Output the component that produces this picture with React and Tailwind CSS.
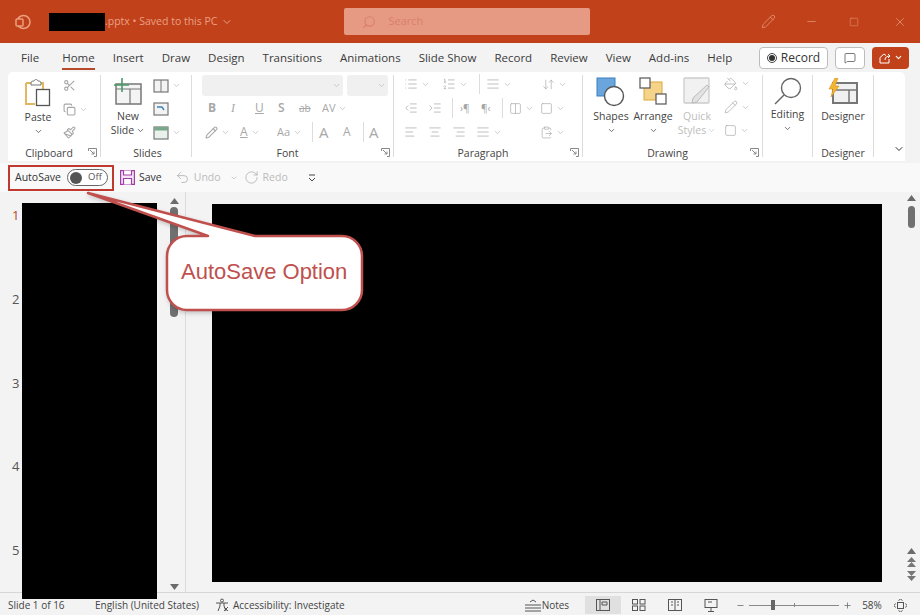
import {
  AlignCenter, AlignJustify, AlignLeft, AlignRight, ArrowDownUp, ChevronDown, ClipboardPaste, Columns2, Copy,
  IndentDecrease, IndentIncrease, List, ListOrdered, MessageSquare, Minus, Paintbrush, PaintBucket, Pencil,
  Plus, RotateCw, Scissors, Search, Square, Undo2, X,
} from "lucide-react";

const SANS = "font-['Open_Sans','Noto_Sans',sans-serif]";

const TABS = ["File", "Home", "Insert", "Draw", "Design", "Transitions", "Animations", "Slide Show", "Record", "Review", "View", "Add-ins", "Help"];

function Chev({ className = "text-[#888]" }) {
  return <ChevronDown size={9} strokeWidth={2} className={className} />;
}

function Launcher() {
  return (
    <svg width="9" height="9" viewBox="0 0 9 9" className="absolute bottom-0 right-[3px] text-[#888]" fill="none" stroke="currentColor">
      <path d="M.5 3V.5H8.500V8.500H6M2 2l4 4M6 3.500V6H3.500" />
    </svg>
  );
}

function Group({ label, className, labelClass = "", children, launcher = true }) {
  return (
    <div className={`relative flex shrink-0 flex-col border-r border-[#dcdcdc] ${className}`}>
      <div className="min-h-0 flex-1">{children}</div>
      <div className={`h-[12px] text-center text-[10.5px] leading-[16px] text-[#444] ${labelClass}`}>{label}</div>
      {launcher && <Launcher />}
    </div>
  );
}

function SmallIcon({ children, chevron = false }) {
  return (
    <div className="flex h-[23.500px] items-center gap-[3px] text-[#a5a5a5]">
      {children}
      {chevron && <Chev className="text-[#bbb]" />}
    </div>
  );
}

function PasteIcon() {
  return (
    <svg width="28" height="29" viewBox="0 0 28 29" fill="none">
      <path d="M2 5h5M17 5h2v6M2 5v21h9" stroke="#e2b75e" strokeWidth="2" />
      <path d="M7 5c0-2 2-2 3-2 1-2 3-2 4 0 1 0 3 0 3 2v2H7z" fill="#fff" stroke="#777" />
      <rect x="12.500" y="11.500" width="13" height="16" fill="#fff" stroke="#555" strokeWidth="1.300" />
    </svg>
  );
}

function NewSlideIcon() {
  return (
    <svg width="30" height="28" viewBox="0 0 30 28" fill="none">
      <rect x="3" y="7" width="25" height="20" fill="#f4f4f4" stroke="#777" strokeWidth="1.500" />
      <path d="M3 12h25M17 12v15" stroke="#777" strokeWidth="1.200" />
      <path d="M9 1v14M1 8h15" stroke="#4a9a68" strokeWidth="1.600" />
    </svg>
  );
}

function SlideThumb({ tone = "plain" }) {
  return (
    <svg width="16" height="14" viewBox="0 0 16 14" fill="none">
      <rect x="1" y="1" width="14" height="12" fill={tone === "green" ? "#e9f1ec" : "#f3f3f3"} stroke="#777" strokeWidth="1.200" />
      {tone === "green" && <rect x="1" y="1" width="14" height="3.500" fill="#79a88c" />}
      {tone === "plain" && <path d="M8 1v12" stroke="#777" />}
      {tone === "blue" && <path d="M4 5h5l2 3" stroke="#3f83b5" strokeWidth="1.400" />}
    </svg>
  );
}

function ShapesIcon() {
  return (
    <svg width="30" height="30" viewBox="0 0 30 30" fill="none">
      <rect x="1" y="1" width="18" height="18" fill="#6aa6dd" stroke="#3c7fbd" />
      <circle cx="18" cy="19" r="9.500" fill="#fff" stroke="#555" strokeWidth="1.400" />
    </svg>
  );
}

function ArrangeIcon() {
  return (
    <svg width="28" height="28" viewBox="0 0 28 28" fill="none">
      <rect x="5" y="5" width="18" height="18" fill="#f5d388" stroke="#dca83d" />
      <rect x="1" y="1" width="10" height="10" fill="#fff" stroke="#555" strokeWidth="1.200" />
      <rect x="17" y="17" width="10" height="10" fill="#fff" stroke="#555" strokeWidth="1.200" />
    </svg>
  );
}

function QuickStylesIcon() {
  return (
    <svg width="28" height="28" viewBox="0 0 28 28" fill="none">
      <rect x="1" y="1" width="25" height="25" rx="1" fill="#f1f1f1" stroke="#ccc" strokeWidth="1.300" />
      <path d="M26 10 14 25l-5 1 1-5L24 8z" fill="#e2e2e2" stroke="#bbb" />
    </svg>
  );
}

function MagnifierIcon() {
  return (
    <svg width="28" height="28" viewBox="0 0 28 28" fill="none" stroke="#666" strokeWidth="1.400">
      <circle cx="17" cy="11" r="9.500" fill="#fff" />
      <path d="M10 18 1 27" />
    </svg>
  );
}

function DesignerIcon() {
  return (
    <svg width="30" height="26" viewBox="0 0 30 26" fill="none">
      <rect x="5" y="5" width="24" height="20" fill="#f1f1f1" stroke="#777" strokeWidth="2" />
      <path d="M5 12h24M21 12v13" stroke="#777" strokeWidth="1.500" />
      <path d="M7 0 1 11h4l-2 8 8-11H7l3-8z" fill="#f2b632" stroke="#d98f1d" strokeWidth=".6" />
    </svg>
  );
}

function SaveIcon() {
  return (
    <svg width="15" height="15" viewBox="0 0 15 15" fill="none" stroke="#a23ca8" strokeWidth="1.200">
      <rect x=".6" y=".6" width="13.800" height="13.800" fill="#f4e5f6" />
      <path d="M3.500 .6v4.400h8V.6M3.500 14.400V8.500h8v5.900" fill="#fff" />
    </svg>
  );
}

function Callout() {
  return (
    <div className="pointer-events-none absolute left-0 top-0 z-20">
      <svg width="400" height="320" viewBox="0 0 400 320" fill="none" className="drop-shadow-[1px_2px_2px_rgba(0,0,0,0.2)]">
        <path
          d="M88 193 208 236H187a20 20 0 0 0-20 20v34a20 20 0 0 0 20 20H342a20 20 0 0 0 20-20V256a20 20 0 0 0-20-20H255Z"
          fill="#fff"
          stroke="#c0504d"
          strokeWidth="2.500"
          strokeLinejoin="round"
        />
      </svg>
      <div className="absolute left-[181px] top-[259px] font-['Liberation_Sans',sans-serif] text-[22px] leading-[26px] whitespace-nowrap text-[#c0504d]">
        AutoSave Option
      </div>
    </div>
  );
}

function ScrollArrow({ up = true }) {
  return (
    <svg width="9" height="6" viewBox="0 0 9 6" className="shrink-0">
      <path d={up ? "M4.500 0 9 6H0z" : "M0 0h9L4.500 6z"} fill="#6b6b6b" />
    </svg>
  );
}

function DoubleArrow({ up = true }) {
  return (
    <svg width="9" height="11" viewBox="0 0 9 11">
      <path d={up ? "M4.500 0 9 5H0zM4.500 5 9 10H0z" : "M0 0h9L4.500 5zM0 5h9L4.500 10z"} fill="#777" />
    </svg>
  );
}

export default function App() {
  return (
    <div className={`relative flex h-[615px] w-[920px] flex-col overflow-hidden bg-[#f3f3f3] text-[#333] ${SANS}`}>
      {/* title bar */}
      <div className="flex h-[43px] shrink-0 items-center bg-[#c1411a] text-[#e9a083]">
        <svg width="16" height="16" viewBox="0 0 16 16" className="ml-[15px]" fill="none" stroke="#eb9f7f" strokeWidth="1.500">
          <circle cx="8.500" cy="8" r="6.500" />
          <rect x="1" y="5" width="7" height="7" rx="1" fill="#c1411a" />
        </svg>
        <div className="ml-[18px] h-[18px] w-[56px] bg-black" />
        <span className="text-[10.5px]">.pptx • Saved to this PC</span>
        <ChevronDown size={12} className="ml-[4px]" />
        <div className="ml-[111px] flex h-[27px] w-[246px] items-center rounded-[2px] bg-[#e69a84] pl-[18px] text-[#d9806a]">
          <Search size={14} className="-scale-x-100" />
          <span className="ml-[12px] text-[11px]">Search</span>
        </div>
        <Pencil size={15} strokeWidth={1.200} className="ml-[171px]" />
        <Minus size={13} className="ml-[29px]" strokeWidth={1.200} />
        <Square size={10} className="ml-[31px]" strokeWidth={1.200} />
        <X size={14} className="ml-[34px]" strokeWidth={1.200} />
      </div>

      {/* tabs */}
      <div className="flex h-[29px] shrink-0 items-center pl-[21px] pr-[11px]">
        <div className="flex items-center gap-[18px] text-[11.5px] text-[#3b3b3b]">
          {TABS.map((tab) => (
            <div key={tab} className={`relative leading-[28px] whitespace-nowrap ${tab === "File" ? "mr-[5px]" : ""}`}>
              {tab}
              {tab === "Home" && <div className="absolute bottom-[2px] left-0 right-0 h-[2px] bg-[#b8482a]" />}
            </div>
          ))}
        </div>
        <div className="ml-auto flex items-center gap-[7px]">
          <div className="flex h-[22px] w-[69px] items-center justify-center gap-[4px] rounded-[4px] border border-[#bdbdbd] bg-white text-[12px]">
            <span className="flex h-[10px] w-[10px] items-center justify-center rounded-full border border-[#444]">
              <span className="h-[6px] w-[6px] rounded-full bg-[#333]" />
            </span>
            Record
          </div>
          <div className="flex h-[22px] w-[30px] items-center justify-center rounded-[4px] border border-[#bdbdbd] bg-white">
            <MessageSquare size={12} strokeWidth={1.300} />
          </div>
          <div className="flex h-[22px] w-[37px] items-center justify-center gap-[3px] rounded-[4px] bg-[#c1411a] text-white">
            <svg width="12" height="12" viewBox="0 0 12 12" fill="none" stroke="#fff">
              <path d="M1 5.500V11h9V7M1 5.500 5 2l2 1.500M6 8c0-3 2-4 5-4M9 2l2 2-2 2" />
            </svg>
            <ChevronDown size={9} strokeWidth={3} />
          </div>
        </div>
      </div>

      {/* ribbon */}
      <div className="relative ml-[8px] flex h-[89px] w-[897px] shrink-0 rounded-t-[5px] bg-white pt-[3px] pb-[4px] text-[#444]">
        <Group label="Clipboard" className="w-[93px]" labelClass="pr-[10px]">
          <div className="flex pl-[14px]">
            <div className="flex w-[32px] flex-col items-center pt-[3px]">
              <PasteIcon />
              <span className="mt-[3px] text-[10.5px] leading-[15px]">Paste</span>
              <ChevronDown size={9} strokeWidth={2} className="mt-[2px]" />
            </div>
            <div className="ml-[9px] flex flex-col -mt-[1px]">
              <SmallIcon><Scissors size={13} /></SmallIcon>
              <SmallIcon chevron><Copy size={13} /></SmallIcon>
              <SmallIcon><Paintbrush size={13} /></SmallIcon>
            </div>
          </div>
        </Group>

        <Group label="Slides" className="w-[91px]" labelClass="pl-[3px]" launcher={false}>
          <div className="flex pl-[10px]">
            <div className="flex w-[34px] flex-col items-center pt-[2px]">
              <NewSlideIcon />
              <span className="mt-[4px] text-[10.5px] leading-[14px]">New</span>
              <span className="flex items-center gap-[2px] text-[10.5px] leading-[14px]">
                Slide <ChevronDown size={9} strokeWidth={2} />
              </span>
            </div>
            <div className="ml-[8px] flex flex-col -mt-[1px]">
              <SmallIcon chevron><SlideThumb /></SmallIcon>
              <SmallIcon><SlideThumb tone="blue" /></SmallIcon>
              <SmallIcon chevron><SlideThumb tone="green" /></SmallIcon>
            </div>
          </div>
        </Group>

        <Group label="Font" className="w-[202px]" labelClass="pr-[10px]">
          <div className="flex flex-col pl-[10px] text-[#a8a8a8]">
            <div className="flex gap-[4px]">
              <div className="flex h-[21px] w-[141px] items-center justify-end rounded-[3px] bg-[#f0f0f0] pr-[2px]"><Chev className="text-[#bbb]" /></div>
              <div className="flex h-[21px] w-[41px] items-center justify-end rounded-[3px] bg-[#f0f0f0] pr-[2px]"><Chev className="text-[#bbb]" /></div>
            </div>
            <div className="flex h-[24px] items-center text-[12px]">
              <span className="w-[23px] pl-[6px] font-bold">B</span>
              <span className="w-[24px] pl-[6px] font-['Liberation_Serif',serif] italic">I</span>
              <span className="w-[23px] pl-[6px] underline">U</span>
              <span className="w-[23px] pl-[6px] font-semibold">S</span>
              <span className="w-[24px] pl-[4px] text-[10px] line-through">ab</span>
              <span className="flex w-[30px] items-center gap-[2px] pl-[3px] text-[11px]">AV <Chev className="text-[#bbb]" /></span>
            </div>
            <div className="flex h-[24px] items-center">
              <span className="flex w-[36px] items-center gap-[3px] pl-[3px]"><Pencil size={13} /><Chev className="text-[#bbb]" /></span>
              <span className="flex w-[37px] items-center gap-[3px] pl-[2px] text-[12px] underline">A<Chev className="text-[#bbb]" /></span>
              <span className="flex w-[37px] items-center gap-[3px] pl-[2px] text-[11px]">Aa<Chev className="text-[#bbb]" /></span>
              <span className="h-[20px] border-l border-[#ddd]" />
              <span className="w-[24px] pl-[6px] text-[15px]">A</span>
              <span className="w-[26px] pl-[6px] text-[12px]">A</span>
              <span className="h-[20px] border-l border-[#ddd]" />
              <span className="pl-[5px] text-[15px]">A</span>
            </div>
          </div>
        </Group>

        <Group label="Paragraph" className="w-[189px]" labelClass="pr-[10px]">
          <div className="flex flex-col pl-[10px] -mt-[3px] text-[#a5a5a5]">
            <div className="flex h-[24px] items-center">
              <span className="flex w-[38px] items-center gap-[3px]"><List size={14} strokeWidth={1.200} /><Chev className="text-[#bbb]" /></span>
              <span className="flex w-[37px] items-center gap-[3px]"><ListOrdered size={14} strokeWidth={1.200} /><Chev className="text-[#bbb]" /></span>
              <span className="h-[20px] border-l border-[#ddd]" />
              <span className="flex w-[62px] items-center gap-[3px] pl-[6px]"><AlignJustify size={14} strokeWidth={1.200} /><Chev className="text-[#bbb]" /></span>
              <span className="flex items-center gap-[3px]"><ArrowDownUp size={13} strokeWidth={1.200} /><Chev className="text-[#bbb]" /></span>
            </div>
            <div className="flex h-[24px] items-center">
              <span className="w-[24px]"><IndentDecrease size={14} strokeWidth={1.200} /></span>
              <span className="w-[24px]"><IndentIncrease size={14} strokeWidth={1.200} /></span>
              <span className="h-[20px] border-l border-[#ddd]" />
              <span className="w-[24px] pl-[7px] text-[10px]">›¶</span>
              <span className="w-[25px] pl-[4px] text-[10px]">¶‹</span>
              <span className="h-[20px] border-l border-[#ddd]" />
              <span className="flex w-[37px] items-center gap-[3px] pl-[6px]"><Columns2 size={13} strokeWidth={1.200} /><Chev className="text-[#bbb]" /></span>
              <span className="flex items-center gap-[3px]"><Square size={13} strokeWidth={1.200} /><Chev className="text-[#bbb]" /></span>
            </div>
            <div className="flex h-[24px] items-center">
              <span className="w-[24px]"><AlignLeft size={14} strokeWidth={1.200} /></span>
              <span className="w-[24px]"><AlignCenter size={14} strokeWidth={1.200} /></span>
              <span className="w-[24px]"><AlignRight size={14} strokeWidth={1.200} /></span>
              <span className="flex w-[62px] items-center gap-[3px]"><AlignJustify size={14} strokeWidth={1.200} /><Chev className="text-[#bbb]" /></span>
              <span className="flex items-center gap-[3px] pl-[2px]"><ClipboardPaste size={13} strokeWidth={1.200} /><Chev className="text-[#bbb]" /></span>
            </div>
          </div>
        </Group>

        <Group label="Drawing" className="w-[180px]" labelClass="pr-[10px]">
          <div className="flex pt-[2px]">
            <div className="flex w-[52px] flex-col items-center pl-[4px]">
              <ShapesIcon />
              <span className="mt-[2px] text-[10.5px] leading-[14px]">Shapes</span>
              <ChevronDown size={9} strokeWidth={2} className="mt-[3px]" />
            </div>
            <div className="flex w-[36px] flex-col items-center">
              <ArrangeIcon />
              <span className="mt-[4px] text-[10.5px] leading-[14px]">Arrange</span>
              <ChevronDown size={9} strokeWidth={2} className="mt-[3px]" />
            </div>
            <div className="ml-[6px] flex w-[40px] flex-col items-center text-[#bdbdbd]">
              <QuickStylesIcon />
              <span className="mt-[4px] text-[10.5px] leading-[14px]">Quick</span>
              <span className="flex items-center gap-[1px] text-[10.5px] leading-[14px]">Styles <Chev className="text-[#ccc]" /></span>
            </div>
            <div className="ml-[7px] flex flex-col -mt-[5px]">
              <SmallIcon chevron><PaintBucket size={14} strokeWidth={1.200} /></SmallIcon>
              <SmallIcon chevron><Pencil size={14} strokeWidth={1.200} /></SmallIcon>
              <SmallIcon chevron><Square size={13} strokeWidth={1.200} /></SmallIcon>
            </div>
          </div>
        </Group>

        <Group label="" className="w-[50px]" launcher={false}>
          <div className="flex flex-col items-center pt-[2px]">
            <MagnifierIcon />
            <span className="mt-[2px] text-[10.5px] leading-[14px]">Editing</span>
            <ChevronDown size={9} strokeWidth={2} className="mt-[3px]" />
          </div>
        </Group>

        <Group label="Designer" className="w-[61px]" launcher={false}>
          <div className="flex flex-col items-center pt-[3px]">
            <DesignerIcon />
            <span className="mt-[5px] text-[10.5px] leading-[14px]">Designer</span>
          </div>
        </Group>

        <ChevronDown size={12} strokeWidth={2} className="absolute bottom-[6px] right-[0px] text-[#333]" />
      </div>

      {/* quick access toolbar */}
      <div className="mt-[2px] flex h-[29px] shrink-0 items-center bg-[#f9f9f9] text-[10.5px]">
        <div className="ml-[8px] flex h-[26px] w-[106px] items-center gap-[6px] border-2 border-[#c0392f] pl-[5px]">
          <span>AutoSave</span>
          <div className="flex h-[17px] w-[41px] items-center rounded-full border border-[#666] bg-white pl-[2px] pr-[5px]">
            <div className="h-[12px] w-[12px] rounded-full bg-[#555]" />
            <span className="ml-auto text-[9.5px] text-[#555]">Off</span>
          </div>
        </div>
        <span className="ml-[6px]"><SaveIcon /></span>
        <span className="ml-[4px]">Save</span>
        <Undo2 size={15} strokeWidth={1.200} className="ml-[13px] text-[#aaa]" />
        <span className="ml-[4px] text-[#bbb]">Undo</span>
        <ChevronDown size={8} className="ml-[9px] text-[#bbb]" />
        <RotateCw size={15} strokeWidth={1.200} className="ml-[6px] text-[#aaa]" />
        <span className="ml-[4px] text-[#bbb]">Redo</span>
        <svg width="8" height="8" viewBox="0 0 8 8" className="ml-[20px]" fill="none" stroke="#444">
          <path d="M1 1h6M1 4l3 3 3-3" />
        </svg>
      </div>

      {/* work area */}
      <div className="flex h-[401px] shrink-0 border-b border-[#d6d6d6]">
        {/* thumbnails */}
        <div className="flex w-[22px] shrink-0 flex-col pl-[12px] pt-[14px] text-[13px] leading-[18px] text-[#555]">
          <span className="h-[84px] text-[#b8482a]">1</span>
          <span className="h-[84px]">2</span>
          <span className="h-[83px]">3</span>
          <span className="h-[84px]">4</span>
          <span>5</span>
        </div>
        <div className="relative z-10 mt-[11px] h-[396px] w-[135px] shrink-0 bg-black" />
        <div className="ml-[11px] flex w-[12px] shrink-0 flex-col items-center pt-[6px] pb-[2px]">
          <ScrollArrow />
          <div className="mt-[3px] h-[110px] w-[8px] rounded-full bg-[#707070]" />
          <div className="mt-auto"><ScrollArrow up={false} /></div>
        </div>
        <div className="ml-[5px] w-[1px] shrink-0 bg-[#dcdcdc]" />

        {/* slide */}
        <div className="ml-[26px] mt-[12px] h-[378px] w-[670px] shrink-0 bg-black" />

        {/* right scrollbar */}
        <div className="ml-[23px] flex w-[13px] shrink-0 flex-col items-center pt-[3px] pb-[10px]">
          <ScrollArrow />
          <div className="mt-[5px] h-[22px] w-[7px] rounded-full bg-[#707070]" />
          <div className="mt-auto flex flex-col items-center gap-[3px]">
            <ScrollArrow />
            <DoubleArrow />
            <DoubleArrow up={false} />
          </div>
        </div>
      </div>

      {/* status bar */}
      <div className="flex h-[21px] shrink-0 items-center pt-[3px] text-[10px] text-[#444]">
        <span className="ml-[8px] w-[87px]">Slide 1 of 16</span>
        <span className="w-[120px]">English (United States)</span>
        <svg width="14" height="14" viewBox="0 0 14 14" fill="none" stroke="#555">
          <circle cx="7" cy="2.500" r="1.500" />
          <path d="M1 5h12M5 5v3l-2 5M9 5v3l2 5M9 9l4 4M13 9l-4 4" />
        </svg>
        <span className="ml-[4px]">Accessibility: Investigate</span>
        <svg width="16" height="13" viewBox="0 0 16 13" className="ml-[180px]" fill="none" stroke="#555">
          <path d="M0 6h16M0 9h16M0 12h16M5 3l3-2 3 2" />
        </svg>
        <span className="ml-[1px]">Notes</span>
        <div className="ml-[16px] flex h-[18px] w-[36px] items-center justify-center bg-[#e0e0e0]">
          <svg width="14" height="12" viewBox="0 0 14 12" fill="none" stroke="#555"><rect x=".5" y=".5" width="13" height="11" /><path d="M4 .5v11M6 6h5V3H6z" /></svg>
        </div>
        <div className="flex w-[36px] justify-center">
          <svg width="14" height="12" viewBox="0 0 14 12" fill="none" stroke="#555"><rect x=".5" y=".5" width="5" height="4.500" /><rect x="8" y=".5" width="5" height="4.500" /><rect x=".5" y="7" width="5" height="4.500" /><rect x="8" y="7" width="5" height="4.500" /></svg>
        </div>
        <div className="flex w-[36px] justify-center">
          <svg width="14" height="12" viewBox="0 0 14 12" fill="none" stroke="#555"><rect x=".5" y=".5" width="13" height="11" /><path d="M7 .5v11M3 3h2M3 6h2M9 3h2M9 6h2" /></svg>
        </div>
        <div className="flex w-[36px] justify-center">
          <svg width="14" height="13" viewBox="0 0 14 13" fill="none" stroke="#555"><rect x="1" y=".5" width="12" height="8" /><path d="M7 8.500V12M4 12.500h6M4 3h4" /></svg>
        </div>
        <Minus size={9} className="ml-[7px] text-[#666]" />
        <div className="relative ml-[4px] flex h-[10px] w-[90px] items-center">
          <div className="h-[1px] w-full bg-[#888]" />
          <div className="absolute left-[22px] h-[10px] w-[4px] bg-[#666]" />
          <div className="absolute left-[45px] h-[4px] w-[1px] bg-[#888]" />
        </div>
        <Plus size={9} className="ml-[4px] text-[#666]" />
        <span className="ml-[10px]">58%</span>
        <svg width="13" height="13" viewBox="0 0 13 13" className="ml-[12px]" fill="none" stroke="#555">
          <rect x="3.500" y="3.500" width="6" height="6" />
          <path d="M4.500 1.500 6.500 0l2 1.500M4.500 11.500l2 1.500 2-1.500M1.500 4.500 0 6.500l1.500 2M11.500 4.500l1.500 2-1.500 2" />
        </svg>
      </div>

      <Callout />
    </div>
  );
}
